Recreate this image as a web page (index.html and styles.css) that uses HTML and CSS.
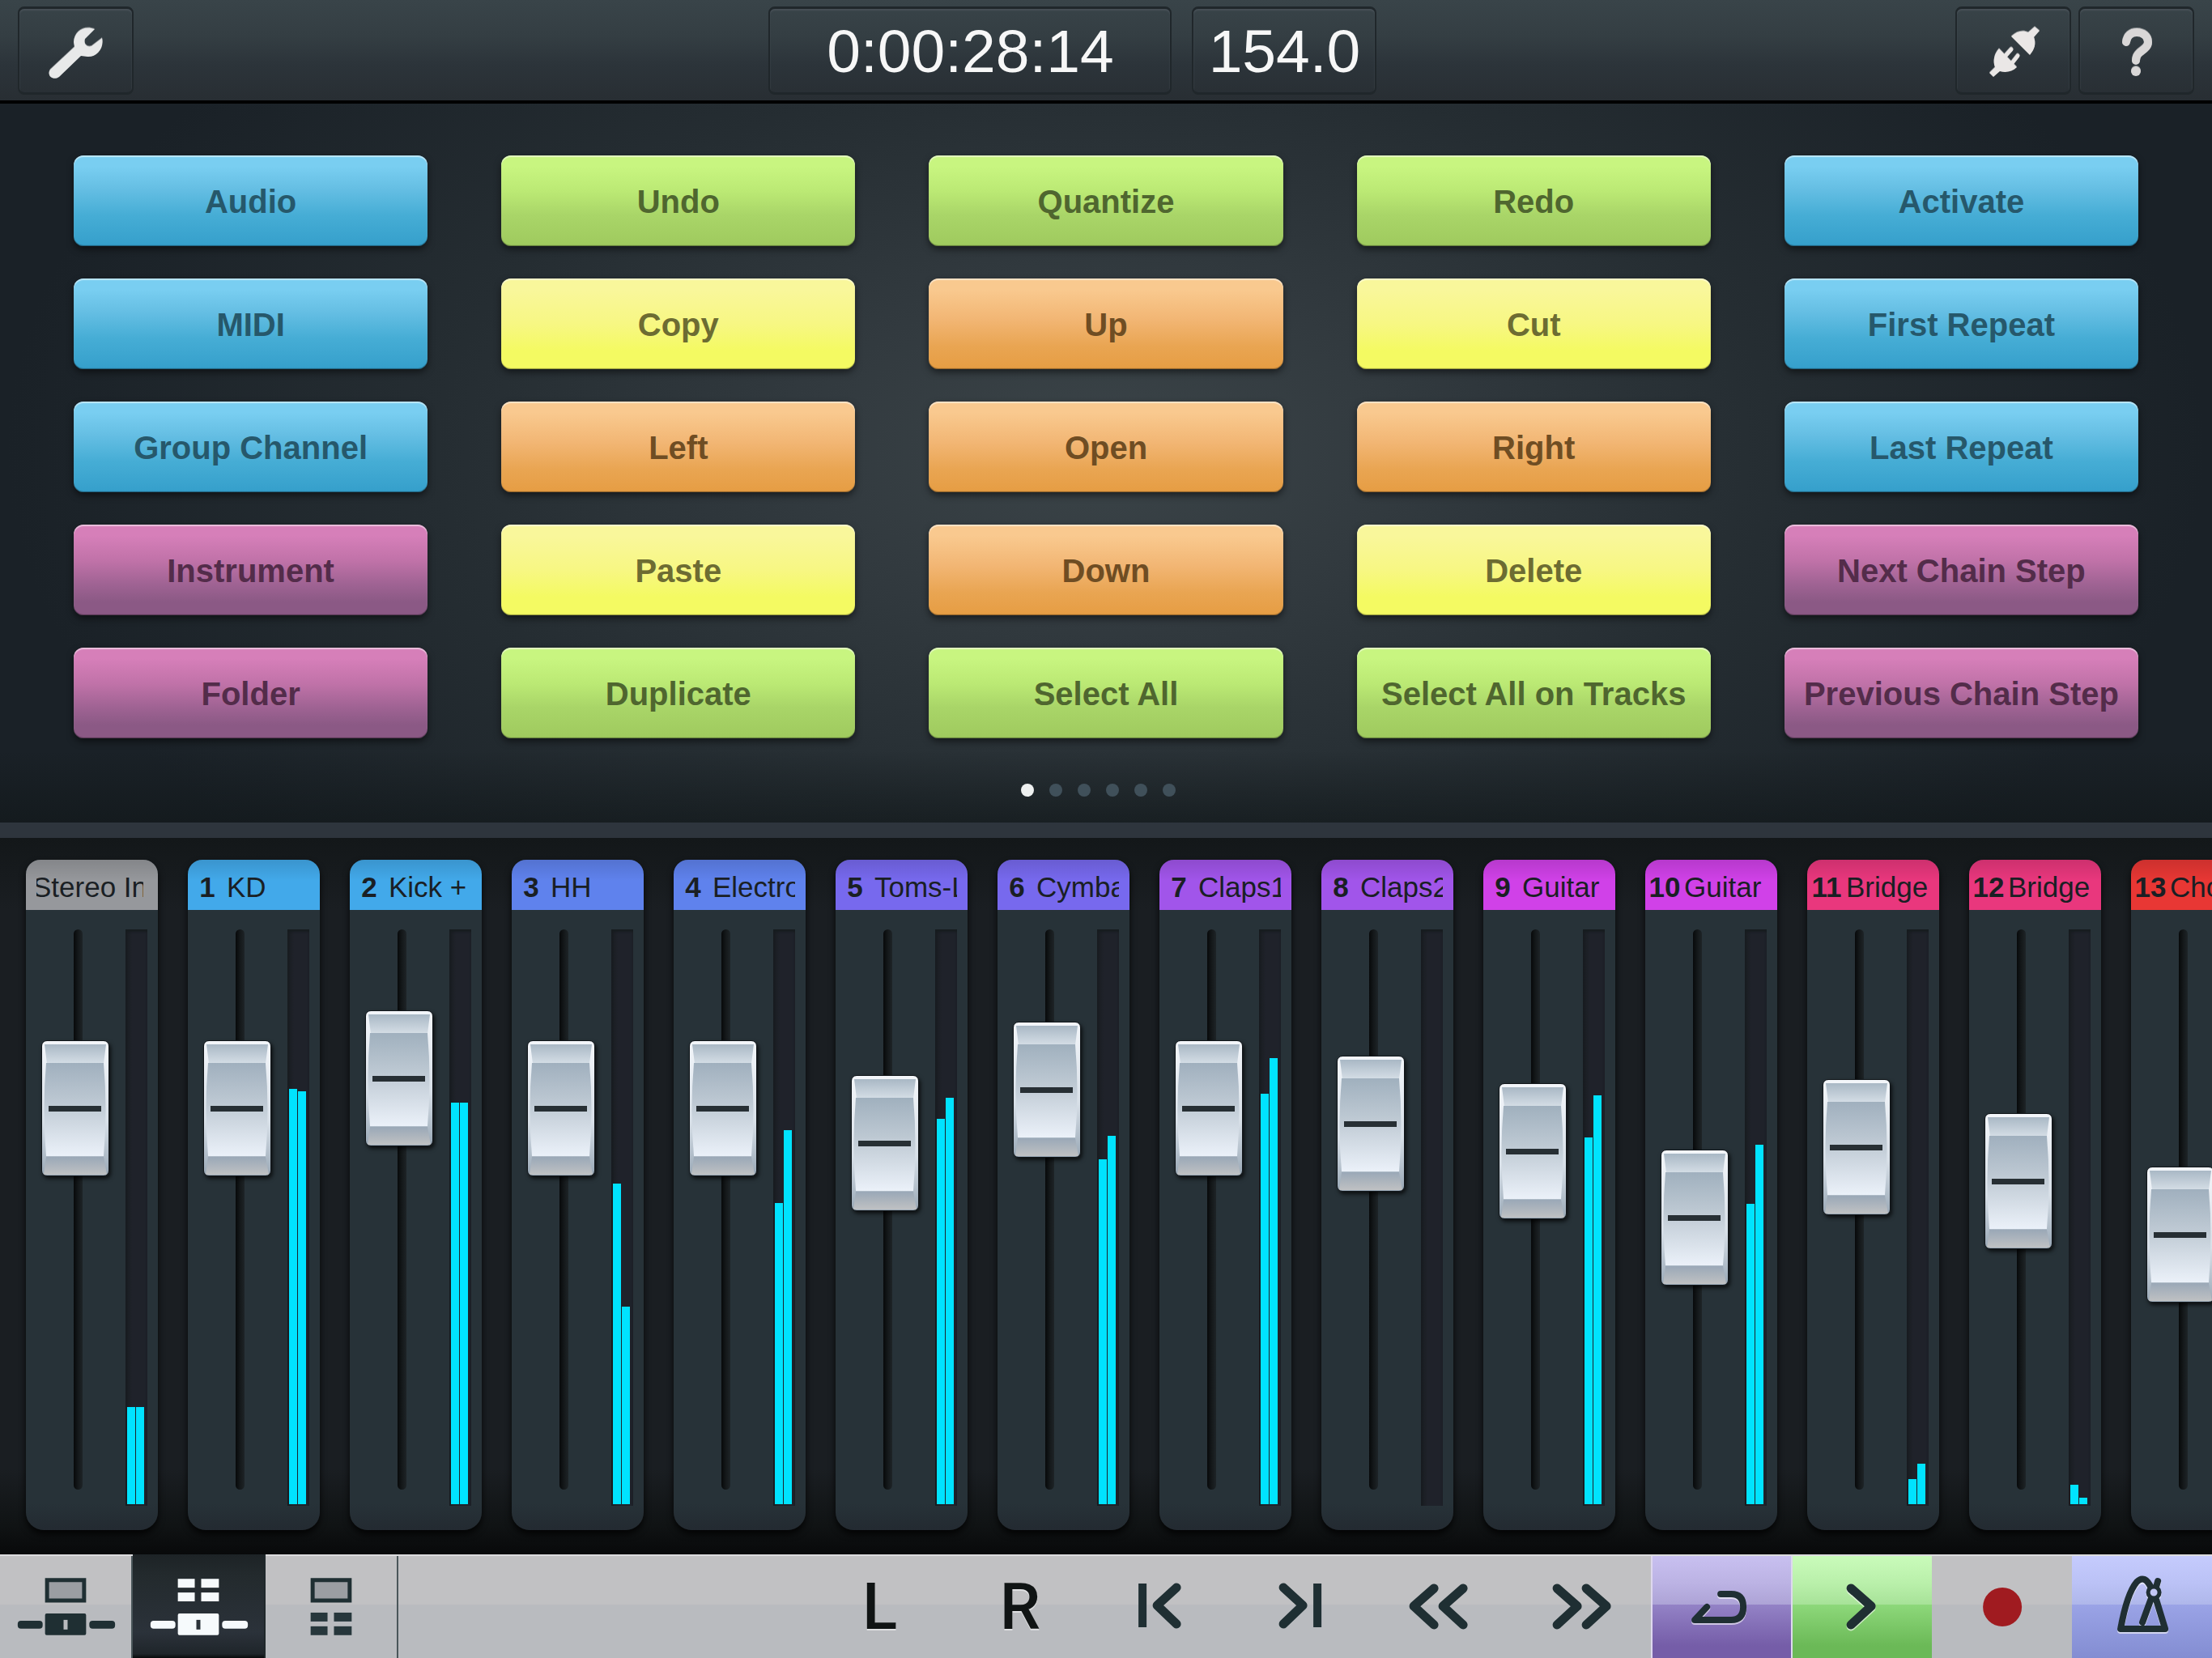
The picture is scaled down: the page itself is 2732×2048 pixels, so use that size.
FILE: index.html
```html
<!DOCTYPE html>
<html lang="en">

<head>
    <meta charset="UTF-8">
    <meta name="viewport" content="width=device-width, initial-scale=1.0">
    <title>Remote</title>
    <link rel="stylesheet" href="styles.css">
</head>

<body>
    <!-- top bar -->
    <header class="topbar">
        <div class="side left">
            <button class="panel icon-btn" aria-label="Settings">
                <svg viewBox="0 0 143 109">
                    <path fill="#e8e9e9" d="M70 50L69 44C70 30 82 23 95 28L83 40C81 46 85 51 91 49L104 39C107 52 97 63 86 62L78 61L51 87C44 92 35 86 40 78Z" />
                </svg>
            </button>
        </div>
        <button class="panel time">0:00:28:14</button>
        <button class="panel tempo">154.0</button>
        <div class="side right">
            <button class="panel icon-btn" aria-label="Connect">
                <svg viewBox="0 0 143 109">
                    <g fill="#eae7e6">
                        <path d="M69 37C76 30 84 29 90 32L98 25L104 30L97 38C100 46 98 53 92 60Z" />
                        <path d="M54 52L76 75C70 81 62 82 55 80L47 87L42 82L49 75C46 68 48 58 54 52Z" />
                    </g>
                    <path d="M61 62L69 53M70 70L77 61" fill="none" stroke="#eae7e6" stroke-width="5" stroke-linecap="round" />
                </svg>
            </button>
            <button class="panel icon-btn" aria-label="Help">
                <svg viewBox="0 0 143 109">
                    <path d="M59 44C60 36 65 32 72 32C80 32 86 37 86 44C86 55 71 54 71 67" fill="none" stroke="#d9d7d7" stroke-width="10" stroke-linecap="round" />
                    <circle cx="71" cy="80" r="6" fill="#d9d7d7" />
                </svg>
            </button>
        </div>
    </header>

    <!-- command pads -->
    <main class="commands">
        <div class="pads" id="pads"></div>
        <div class="dots">
            <span class="dot on"></span>
            <span class="dot"></span>
            <span class="dot"></span>
            <span class="dot"></span>
            <span class="dot"></span>
            <span class="dot"></span>
        </div>
    </main>

    <div class="divider"></div>

    <!-- mixer -->
    <section class="mixer" id="mixer"></section>

    <!-- transport -->
    <footer class="transport">
        <button class="view" aria-label="Screen and mixer">
            <svg viewBox="0 0 163 128">
                <path d="M58.500 31.500H104.500V57H58.500Z" fill="#9b9ea3" stroke="#1f2f33" stroke-width="5" />
                <g fill="#1f2f33">
                    <rect x="56" y="73" width="51" height="27" rx="2" />
                    <rect x="22" y="82" width="31" height="10" rx="4" />
                    <rect x="111" y="82" width="32" height="10" rx="4" />
                </g>
                <rect x="79" y="81" width="5" height="12" fill="#b9bbbf" />
            </svg>
        </button>
        <button class="view active" aria-label="Pads and mixer">
            <svg viewBox="0 0 163 128">
                <g fill="#f6fafc">
                    <rect x="56" y="30" width="21" height="11" />
                    <rect x="85" y="30" width="22" height="11" />
                    <rect x="56" y="47" width="21" height="11" />
                    <rect x="85" y="47" width="22" height="11" />
                    <rect x="56" y="73" width="51" height="27" rx="2" />
                    <rect x="22" y="82" width="31" height="10" rx="4" />
                    <rect x="111" y="82" width="32" height="10" rx="4" />
                </g>
                <rect x="79" y="81" width="5" height="12" fill="#2a3238" />
            </svg>
        </button>
        <button class="view" aria-label="Screen and pads">
            <svg viewBox="0 0 163 128">
                <path d="M58.500 31.500H104.500V57H58.500Z" fill="#9b9ea3" stroke="#1f2f33" stroke-width="5" />
                <g fill="#27373c">
                    <rect x="56" y="72" width="21" height="11" />
                    <rect x="85" y="72" width="22" height="11" />
                    <rect x="56" y="89" width="21" height="11" />
                    <rect x="85" y="89" width="22" height="11" />
                </g>
            </svg>
        </button>
        <div class="keys">
            <button class="key letter">L</button>
            <button class="key letter">R</button>
            <button class="key" aria-label="Previous marker">
                <svg viewBox="0 0 173 128">
                    <path d="M107 41L83 63L107 86" />
                    <path class="bar" d="M65 36V90" />
                </svg>
            </button>
            <button class="key" aria-label="Next marker">
                <svg viewBox="0 0 173 128">
                    <path d="M65 41L89 63L65 86" />
                    <path class="bar" d="M107 36V90" />
                </svg>
            </button>
            <button class="key" aria-label="Rewind">
                <svg viewBox="0 0 173 128">
                    <path d="M78 42L53 64L78 87M114 42L89 64L114 87" />
                </svg>
            </button>
            <button class="key" aria-label="Forward">
                <svg viewBox="0 0 173 128">
                    <path d="M57 42L82 64L57 87M93 42L118 64L93 87" />
                </svg>
            </button>
            <button class="key cycle" aria-label="Cycle">
                <svg viewBox="0 0 173 128">
                    <path class="thin" d="M86 49H99Q114 49 114 65T99 81H54L69 65" />
                </svg>
            </button>
            <button class="key play" aria-label="Play">
                <svg viewBox="0 0 173 128">
                    <path d="M74 42L99 64L74 87" />
                </svg>
            </button>
            <button class="key" aria-label="Record">
                <svg viewBox="0 0 173 128">
                    <circle cx="87" cy="65" r="24" fill="#a01b20" />
                </svg>
            </button>
            <button class="key click" aria-label="Metronome">
                <svg viewBox="0 0 173 128">
                    <path class="thin" d="M98 42Q90 24 80 34Q68 48 60 92H115L104 56M87 84L98 54M104 40L106 33" />
                    <circle cx="101" cy="47" r="7" fill="#c3c8f5" stroke="#1f2f33" stroke-width="5" />
                </svg>
            </button>
        </div>
    </footer>

    <script src="script.js"></script>
</body>

</html>
```
FILE: styles.css
```css
* {
    box-sizing: border-box;
    margin: 0;
    padding: 0;
}

body {
    min-height: 100vh;
    display: flex;
    flex-direction: column;
    overflow: hidden;
    background-color: #1a1f23;
    font-family: "Liberation Sans", Arial, sans-serif;
}

button {
    border: 0;
    background: none;
    font-family: inherit;
    cursor: pointer;
}

svg {
    display: block;
    width: 100%;
}

/* top bar */
.topbar {
    display: flex;
    gap: 25px;
    padding: 8px 22px;
    height: 128px;
    border-bottom: 4px solid #000;
    background: linear-gradient(#394449, #343e43 36%, #2c343a 64%, #282e33);
}

.side {
    display: flex;
    gap: 9px;
}

.left {
    flex: 11 0 0;
}

.right {
    flex: 12 0 0;
    justify-content: flex-end;
}

.panel {
    height: 109px;
    border: 2px solid #20272b;
    border-top-width: 3px;
    border-bottom-width: 3px;
    border-radius: 8px;
    box-shadow: inset 0 2px 2px #485158;
    color: #f7f7f7;
    font-size: 75px;
    line-height: 104px;
}

.icon-btn {
    width: 143px;
}

.icon-btn svg {
    margin: -3px -2px;
    width: 143px;
    filter: drop-shadow(0 -1px 0 #8b8f92);
}

.time {
    width: 498px;
}

.tempo {
    width: 228px;
}

/* command pads */
.commands {
    padding: 64px 91px 0;
    height: 888px;
    background:
        linear-gradient(transparent 90%, rgba(16, 22, 24, 0.6)),
        radial-gradient(54% 94% at 50% 48%, #3b4448, #323a3f 25%, #252d32 56%, #1a2127 92%);
}

.pads {
    display: grid;
    grid-template-columns: repeat(5, 1fr);
    gap: 40px 91px;
}

.pad {
    height: 112px;
    padding-top: 3px;
    border-radius: 12px;
    font-size: 40px;
    font-weight: bold;
    white-space: nowrap;
    box-shadow: 0 4px 8px rgba(0, 0, 0, 0.5), inset 0 2px 1px rgba(255, 255, 255, 0.5), inset 0 -1px 1px rgba(0, 0, 0, 0.4);
}

.blue {
    background: linear-gradient(#79cef1 12%, #66bfe4 36%, #46add5 66%, #359fcb);
    color: #26586b;
}

.green {
    background: linear-gradient(#c8f580 12%, #bbe974 40%, #a9d568 66%, #9fca5e);
    color: #4f662f;
}

.yellow {
    background: linear-gradient(#f9f79b 12%, #f7f783 50%, #f4fa62 80%);
    color: #6d6c32;
}

.orange {
    background: linear-gradient(#f9c98f 12%, #f2b674 45%, #e9a552 75%, #e69d43);
    color: #6f4d23;
}

.purple {
    background: linear-gradient(#d67fb9 12%, #c072a8 40%, #9f6393 66%, #8b5985 85%);
    color: #532c4a;
}

.dots {
    display: flex;
    justify-content: center;
    gap: 19px;
    margin: 56px 20px 0 0;
}

.dot {
    width: 16px;
    height: 16px;
    border-radius: 50%;
    background-color: #40505a;
}

.on {
    background-color: #eef0f0;
}

.divider {
    height: 19px;
    background-color: #2e353d;
}

/* mixer */
.mixer {
    flex: 1;
    display: flex;
    gap: 37px;
    padding: 27px 0 30px 32px;
    overflow: hidden;
    background: linear-gradient(#131719, #1a1e22 10%, #1a1e22 88%, #101314 96%, #08090a);
}

.channel {
    flex: 0 0 163px;
    display: flex;
    flex-direction: column;
    border-radius: 18px 18px 22px 22px;
    background: linear-gradient(#273238 96%, #232a31);
    box-shadow: 0 5px 8px rgba(0, 0, 0, 0.8);
}

.channel-head {
    display: flex;
    height: 62px;
    padding-top: 6px;
    border-radius: 18px 18px 0 0;
    background-image: linear-gradient(rgba(0, 0, 0, 0.12), transparent 42%);
    color: #1a1f24;
    font-size: 35px;
    line-height: 56px;
    white-space: nowrap;
}

.number {
    width: 48px;
    font-weight: bold;
    text-align: center;
}

.name {
    width: 102px;
    overflow: hidden;
}

/* input bus has no number, its name fills the head */
.wide {
    display: flex;
    justify-content: center;
    width: 132px;
    margin-left: 13px;
}

.channel-body {
    display: flex;
    justify-content: space-between;
    padding: 24px 13px 0 19px;
}

.fader {
    position: relative;
    width: 84px;
    height: 692px;
}

.fader::before {
    content: "";
    position: absolute;
    left: 40px;
    top: 0;
    width: 11px;
    height: 100%;
    border-radius: 6px;
    background: linear-gradient(to right, #07090a, #14181a 50%, #1e2427);
}

.fader input {
    position: relative;
    display: block;
    width: 84px;
    height: 692px;
    margin: 0;
    writing-mode: vertical-lr;
    direction: rtl;
    appearance: none;
    -webkit-appearance: none;
    background: none;
}

.fader input::-webkit-slider-thumb {
    -webkit-appearance: none;
    width: 84px;
    height: 168px;
    border: 1px solid #12171b;
    border-radius: 7px;
    box-shadow: 2px 3px 5px rgba(0, 0, 0, 0.7);
    background: url("data:image/svg+xml,%3Csvg xmlns='http://www.w3.org/2000/svg' viewBox='0 0 82 166' preserveAspectRatio='none'%3E%3Cdefs%3E%3ClinearGradient id='s' x2='0' y2='1'%3E%3Cstop stop-color='%23f3f6fa'/%3E%3Cstop offset='.6' stop-color='%23d8e0e8'/%3E%3Cstop offset='1' stop-color='%2399a8b6'/%3E%3C/linearGradient%3E%3ClinearGradient id='t' x2='0' y2='1'%3E%3Cstop stop-color='%23a9b8c5'/%3E%3Cstop offset='1' stop-color='%23d5dee6'/%3E%3C/linearGradient%3E%3ClinearGradient id='m' x2='0' y2='1'%3E%3Cstop stop-color='%23a0b0be'/%3E%3Cstop offset='.45' stop-color='%23bfcad4'/%3E%3Cstop offset='1' stop-color='%23ebf1f9'/%3E%3C/linearGradient%3E%3ClinearGradient id='b' x2='0' y2='1'%3E%3Cstop stop-color='%239aa8b7'/%3E%3Cstop offset='1' stop-color='%23bfc1c3'/%3E%3C/linearGradient%3E%3C/defs%3E%3Crect width='82' height='166' fill='url(%23s)'/%3E%3Cpath d='M3 4H79L76 28H6Z' fill='url(%23t)'/%3E%3Cpath d='M5 27H76Q81 85 76 142H5Q0 85 5 27Z' fill='url(%23m)'/%3E%3Cpath d='M5 143H76L80 165H2Z' fill='url(%23b)'/%3E%3Cpath d='M8 80H73V87H8Z' fill='%23272f34'/%3E%3C/svg%3E") center / 100% 100% no-repeat;
}

.meter {
    display: flex;
    align-items: flex-end;
    gap: 1px;
    width: 27px;
    height: 712px;
    padding: 0 2px 2px;
    background: linear-gradient(to right, #181c20, #1f222a 30%);
    box-shadow: inset 0 3px 3px #171c1f;
}

.level {
    width: 10px;
    background-color: #00e3ff;
}

/* transport */
.transport {
    display: flex;
    height: 128px;
    border-top: 2px solid #dcdcde;
    background: linear-gradient(#c1c1c3 48%, #b9bbbf 48%);
}

.view {
    width: 164px;
    border-right: 2px solid #4a565a;
}

.view svg,
.key svg {
    height: 128px;
    margin-top: -2px;
}

.active {
    margin-top: -2px;
    border-right-color: #20282b;
    background: linear-gradient(#1d2326, #232a2d 20%, #2b323a 75%, #1f252a 96%, #080a0b);
}

.active svg {
    margin-top: 0;
}

.keys {
    display: flex;
    width: 1732px;
    margin-left: auto;
}

.key {
    flex: 1;
}

.letter {
    color: #101414;
    font-family: Roboto, sans-serif;
    font-size: 80px;
    font-weight: 500;
    line-height: 126px;
    text-shadow: 0 2px 0 #dfe0e2;
}

.key path {
    fill: none;
    stroke: #1f2f33;
    stroke-width: 11;
    stroke-linecap: round;
    stroke-linejoin: round;
}

.key .bar {
    stroke-width: 10;
    stroke-linecap: butt;
}

.key .thin {
    stroke-width: 8;
}

.cycle,
.play {
    box-shadow: inset 2px 0 0 #ded8ee;
}

.cycle {
    background: linear-gradient(#c8c0f0, #bcb3e4 26%, #ada3d6 48%, #9382c6 48%, #755da8 88%);
}

.play {
    background: linear-gradient(#c9fbba, #baf0ab 26%, #a7e298 48%, #8dd87a 48%, #6bb957 88%);
}

.click {
    background: linear-gradient(#c5cbfd, #bbc2f6 26%, #afb7ea 48%, #9aa3e6 48%, #838dd2);
}

.cycle svg,
.play svg,
.click svg {
    filter: drop-shadow(0 2px 0 rgba(255, 255, 255, 0.6));
}
```
FILE: script.js
```js
// command pads, row by row
const pads = [
    ["Audio", "blue"], ["Undo", "green"], ["Quantize", "green"], ["Redo", "green"], ["Activate", "blue"],
    ["MIDI", "blue"], ["Copy", "yellow"], ["Up", "orange"], ["Cut", "yellow"], ["First Repeat", "blue"],
    ["Group Channel", "blue"], ["Left", "orange"], ["Open", "orange"], ["Right", "orange"], ["Last Repeat", "blue"],
    ["Instrument", "purple"], ["Paste", "yellow"], ["Down", "orange"], ["Delete", "yellow"], ["Next Chain Step", "purple"],
    ["Folder", "purple"], ["Duplicate", "green"], ["Select All", "green"], ["Select All on Tracks", "green"], ["Previous Chain Step", "purple"]
];

// fader is 0-100, levels are the left and right meter in px
const channels = [
    { number: "", name: "Stereo In", color: "#96989c", fader: 73.9, levels: [120, 120] },
    { number: 1, name: "KD", color: "#42a9ea", fader: 73.9, levels: [513, 510] },
    { number: 2, name: "Kick +", color: "#42a9ea", fader: 81, levels: [496, 496] },
    { number: 3, name: "HH", color: "#5f82ed", fader: 73.9, levels: [396, 244] },
    { number: 4, name: "Electro", color: "#5f82ed", fader: 73.9, levels: [372, 462] },
    { number: 5, name: "Toms-L", color: "#7769ee", fader: 65.7, levels: [476, 502] },
    { number: 6, name: "Cymbal", color: "#7769ee", fader: 78.3, levels: [426, 455] },
    { number: 7, name: "Claps1", color: "#a155ea", fader: 73.9, levels: [507, 551] },
    { number: 8, name: "Claps2", color: "#a155ea", fader: 70.3, levels: [0, 0] },
    { number: 9, name: "Guitar", color: "#d041e8", fader: 63.7, levels: [453, 505] },
    { number: 10, name: "Guitar", color: "#d041e8", fader: 48.1, levels: [371, 444] },
    { number: 11, name: "Bridge", color: "#e9377d", fader: 64.7, levels: [31, 50] },
    { number: 12, name: "Bridge", color: "#e9377d", fader: 56.7, levels: [24, 8] },
    { number: 13, name: "Chorus", color: "#e83734", fader: 44, levels: [0, 0] }
];

document.getElementById("pads").innerHTML = pads
    .map(([label, color]) => `<button class="pad ${color}">${label}</button>`)
    .join("");

document.getElementById("mixer").innerHTML = channels.map((ch) => `
    <div class="channel">
        <label class="channel-head" for="fader${ch.number}" style="background-color: ${ch.color}">
            ${ch.number ? `<span class="number">${ch.number}</span>` : ""}
            <span class="name ${ch.number ? "" : "wide"}">${ch.name}</span>
        </label>
        <div class="channel-body">
            <div class="fader">
                <input type="range" id="fader${ch.number}" min="0" max="100" step="0.1" value="${ch.fader}">
            </div>
            <div class="meter">
                <div class="level" style="height: ${ch.levels[0]}px"></div>
                <div class="level" style="height: ${ch.levels[1]}px"></div>
            </div>
        </div>
    </div>`).join("");
```
